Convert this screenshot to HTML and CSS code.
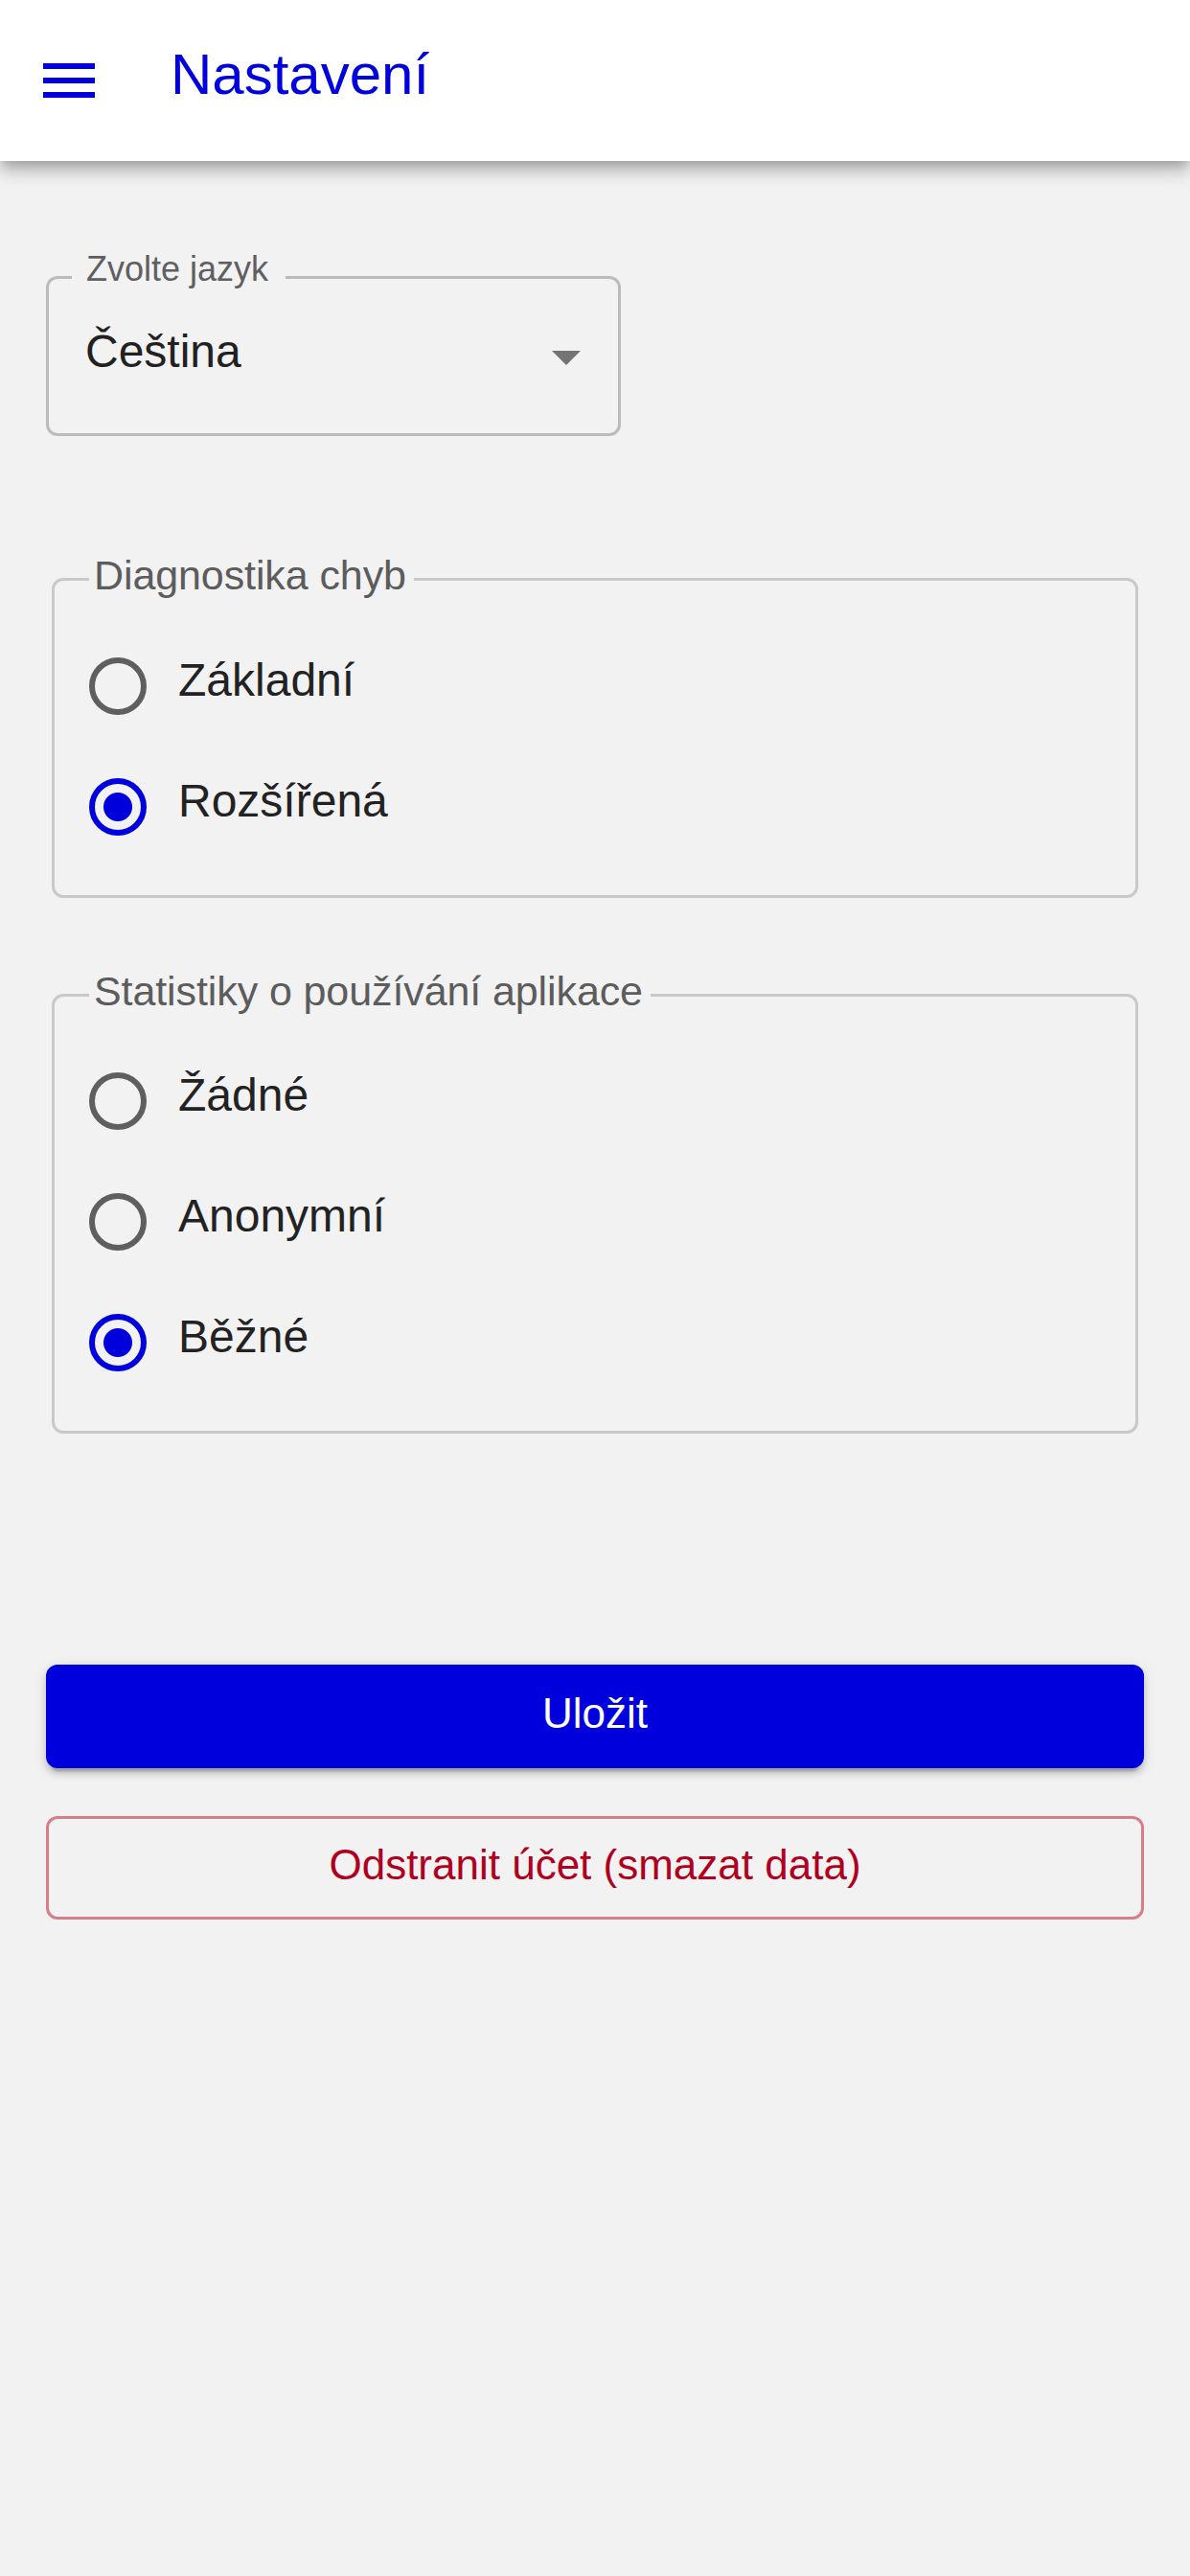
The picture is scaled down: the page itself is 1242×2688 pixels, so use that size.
FILE: index.html
```html
<!DOCTYPE html>
<html lang="cs">
<head>
<meta charset="utf-8">
<title>Nastavení</title>
<link rel="stylesheet" href="styles.css">
</head>
<body>
<header class="appbar">
  <svg class="menu" viewBox="0 0 24 24" width="72" height="72" aria-hidden="true"><path d="M3 18h18v-2H3v2zm0-5h18v-2H3v2zm0-7v2h18V6H3z"/></svg>
  <h1 class="title">Nastavení</h1>
</header>
<main class="content">
  <fieldset class="select">
    <legend class="select-label">Zvolte jazyk</legend>
    <div class="select-value">
      <span class="select-text">Čeština</span>
      <span class="select-arrow"></span>
    </div>
  </fieldset>

  <fieldset class="group group-first">
    <legend class="group-label">Diagnostika chyb</legend>
    <div class="options">
      <label class="option"><input type="radio" name="diag" class="radio"><span class="option-text">Základní</span></label>
      <label class="option"><input type="radio" name="diag" class="radio" checked><span class="option-text">Rozšířená</span></label>
    </div>
  </fieldset>

  <fieldset class="group group-second">
    <legend class="group-label">Statistiky o používání aplikace</legend>
    <div class="options">
      <label class="option"><input type="radio" name="stats" class="radio"><span class="option-text">Žádné</span></label>
      <label class="option"><input type="radio" name="stats" class="radio"><span class="option-text">Anonymní</span></label>
      <label class="option"><input type="radio" name="stats" class="radio" checked><span class="option-text">Běžné</span></label>
    </div>
  </fieldset>

  <button type="button" class="btn btn-save">Uložit</button>
  <button type="button" class="btn btn-delete">Odstranit účet (smazat data)</button>
</main>
</body>
</html>
```
FILE: styles.css
```css
html, body {
  margin: 0;
  padding: 0;
}

body {
  background: #f2f2f2;
  font-family: "Liberation Sans", Arial, sans-serif;
  color: #222222;
  min-height: 2688px;
}

.appbar {
  position: relative;
  z-index: 1;
  box-sizing: border-box;
  height: 168px;
  background: #ffffff;
  display: flex;
  align-items: flex-start;
  padding: 48px 0 0 36px;
  box-shadow: 0 6px 12px -3px rgba(0, 0, 0, 0.2),
              0 12px 15px 0 rgba(0, 0, 0, 0.14),
              0 3px 30px 0 rgba(0, 0, 0, 0.12);
}

.menu {
  display: block;
  flex: none;
  fill: #0000dd;
}

.title {
  margin: 0 0 0 70px;
  font-size: 60px;
  line-height: 60px;
  font-weight: 400;
  color: #0000dd;
}

.content {
  padding: 0 48px;
  display: flex;
  flex-direction: column;
  align-items: stretch;
}

/* language select (outlined) */
.select {
  box-sizing: border-box;
  width: 600px;
  min-inline-size: 0;
  margin: 92px 0 0 0;
  padding: 0;
  border: 3px solid #bbbbbb;
  border-radius: 12px;
}

.select-label {
  margin-left: 24px;
  padding: 0 18px 16px 15px;
  font-size: 36px;
  line-height: 42px;
  color: #5f5f5f;
}

.select-value {
  box-sizing: border-box;
  height: 134px;
  padding: 0 39px 38px 38px;
  display: flex;
  align-items: center;
  justify-content: space-between;
}

.select-text {
  font-size: 48px;
  line-height: 55px;
  color: #212121;
}

.select-arrow {
  width: 0;
  height: 0;
  margin-top: 14px;
  border-left: 15px solid transparent;
  border-right: 15px solid transparent;
  border-top: 15px solid #747474;
}

/* radio groups */
.group {
  box-sizing: border-box;
  min-inline-size: 0;
  margin: 0 6px;
  padding: 48px 36px 62px 36px;
  border: 3px solid #c9c9c9;
  border-radius: 12px;
}

.group-first {
  margin-top: 121px;
}

.group-second {
  margin-top: 73px;
  padding-top: 47px;
  padding-bottom: 62px;
}

.group-label {
  padding: 0 8px 9px 5px;
  font-size: 43px;
  line-height: 48px;
  letter-spacing: -0.1px;
  color: #5c5c5c;
}

.options {
  display: flex;
  flex-direction: column;
  gap: 61px;
}

.option {
  display: flex;
  align-items: flex-start;
}

.radio {
  appearance: none;
  -webkit-appearance: none;
  box-sizing: border-box;
  flex: none;
  width: 60px;
  height: 60px;
  margin: 5px 0 0 0;
  border: 6px solid #5f5f5f;
  border-radius: 50%;
  background: transparent;
}

.radio:checked {
  border-color: #0000dd;
  background: radial-gradient(circle, #0000dd 0 14.5px, transparent 15.5px);
}

.option-text {
  margin: 2px 0 0 33px;
  font-size: 48px;
  line-height: 54px;
  color: #222222;
}

/* buttons */
.btn {
  box-sizing: border-box;
  display: flex;
  align-items: center;
  justify-content: center;
  width: 100%;
  height: 108px;
  margin: 0;
  padding: 0 0 7px 0;
  border-radius: 12px;
  font-family: inherit;
  font-size: 44px;
  line-height: 50px;
  font-weight: 400;
}

.btn-save {
  margin-top: 241px;
  border: none;
  background: #0000dd;
  color: #ffffff;
  box-shadow: 0 9px 3px -6px rgba(0, 0, 0, 0.2),
              0 6px 6px 0 rgba(0, 0, 0, 0.14),
              0 3px 15px 0 rgba(0, 0, 0, 0.12);
}

.btn-delete {
  margin-top: 50px;
  border: 3px solid #d77f88;
  background: transparent;
  color: #b00020;
}
```
